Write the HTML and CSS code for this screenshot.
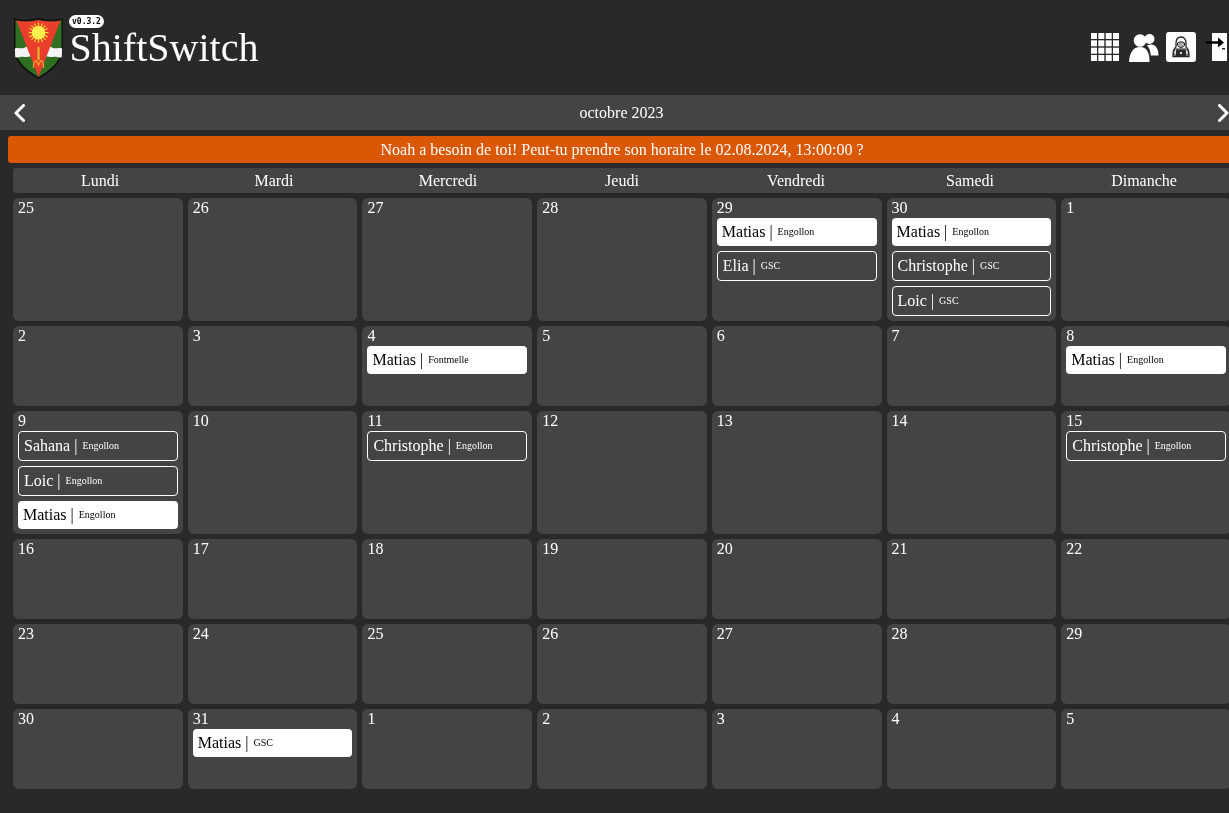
FILE: index.html
```html
<!DOCTYPE html>
<html lang="fr">
<head>
<meta charset="utf-8">
<title>ShiftSwitch</title>
<link rel="stylesheet" href="styles.css">
</head>
<body>
<div class="page">
  <header class="topbar">
    <div class="brand">
      <svg class="logo" viewBox="0 0 52 63" width="52" height="63">
        <path d="M1 1 C8 3 14 3.500 25.500 .8 C37 3.500 43 3 50 1 L50 34 C49 46 37 56 25.500 62 C14 56 2 46 1 34 Z" fill="#111"/>
        <path d="M2.500 3 C9 5 15 5 25.500 3 C36 5 42 5 48.500 3 L48.500 34 C47 45 36 54 25.500 60 C15 54 4 45 2.500 34 Z" fill="#2f7023"/>
        <path d="M1.800 31.500 C5 30 8 32 11 31 C13 29.500 16 29.500 18 30.500 L20 39.500 C16 39 14 40.500 11 40 C8 39 5 41.500 2.200 40 Z" fill="#f6f6f6"/>
        <path d="M49.200 31.500 C46 30 43 32 40 31 C38 29.500 35 29.500 33 30.500 L31 39.500 C35 39 37 40.500 40 40 C43 39 46 41.500 48.800 40 Z" fill="#f6f6f6"/>
        <path d="M3.500 3.500 C10 5 15 5 25.500 3 C36 5 41 5 47.500 3.500 L25.500 60 Z" fill="#ea3d2c"/>
        <g stroke="#fbd92b" stroke-width="1.200">
          <path d="M25.500 5.500V26M15.500 15.700H35.500M18.400 8.600L32.600 22.800M32.600 8.600L18.400 22.800M21.500 6.500L29.500 24.900M29.500 6.500L21.500 24.900M16.300 11.500L34.700 19.900M34.700 11.500L16.300 19.900"/>
        </g>
        <circle cx="25.500" cy="15.700" r="6.800" fill="#fdf04f"/>
        <path d="M25.500 30V43" stroke="#e0a92f" stroke-width="2.500"/>
        <path d="M20.500 51 C20.500 45 22 43 23.500 44 L25.500 48 L27.500 44 C29 43 30.500 45 30.500 51" fill="none" stroke="#f09a28" stroke-width="1.500"/>
      </svg>
      <div class="brand-text">
        <span class="version">v0.3.2</span>
        <span class="title">ShiftSwitch</span>
      </div>
    </div>
    <nav class="tools">
      <svg class="tool-grid" viewBox="0 0 28 28" width="28" height="28" fill="#fff">
        <rect x="0" y="0" width="6" height="6"/><rect x="7.300" y="0" width="6" height="6"/><rect x="14.700" y="0" width="6" height="6"/><rect x="22" y="0" width="6" height="6"/>
        <rect x="0" y="7.300" width="6" height="6"/><rect x="7.300" y="7.300" width="6" height="6"/><rect x="14.700" y="7.300" width="6" height="6"/><rect x="22" y="7.300" width="6" height="6"/>
        <rect x="0" y="14.700" width="6" height="6"/><rect x="7.300" y="14.700" width="6" height="6"/><rect x="14.700" y="14.700" width="6" height="6"/><rect x="22" y="14.700" width="6" height="6"/>
        <rect x="0" y="22" width="6" height="6"/><rect x="7.300" y="22" width="6" height="6"/><rect x="14.700" y="22" width="6" height="6"/><rect x="22" y="22" width="6" height="6"/>
      </svg>
      <svg class="tool-users" viewBox="0 0 30 28" width="30" height="28" fill="#fff">
        <circle cx="11" cy="6.500" r="6.300"/>
        <circle cx="20.500" cy="5" r="5"/>
        <path d="M0 28 C.5 19 4 13 11 13 C18 13 20.500 19 20.500 28 Z"/>
        <path d="M18 11.500 C19.500 10.500 21 10.500 22.500 10.500 C26 10.500 29.500 14 29.500 21.500 H21.700 C21.500 17 20.500 14 18 11.500 Z"/>
      </svg>
      <div class="tool-box">
        <svg viewBox="0 0 22 24" width="22" height="24">
          <path d="M11 2 C7.500 2 6 5 6 8.500 L6 12 C4 13.500 3 16 3 20 L3 21.500 L19 21.500 L19 20 C19 16 18 13.500 16 12 L16 8.500 C16 5 14.500 2 11 2 Z" fill="#fff" stroke="#222" stroke-width="1.300"/>
          <path d="M7.500 8 C9 6.500 13 6.500 14.500 8 L14.500 10.500 C13 13 9 13 7.500 10.500 Z" fill="#aaa" stroke="#222" stroke-width="1"/>
          <path d="M5.500 14 C4 15 3.500 17 3.500 20 L18.500 20 C18.500 17 18 15 16.500 14 Z" fill="#ddd" stroke="#222" stroke-width="1"/>
          <rect x="6" y="14.500" width="10" height="7" rx="1" fill="#2b2b2b"/>
          <rect x="10" y="17" width="2" height="2" fill="#ddd"/>
        </svg>
      </div>
      <svg class="tool-door" viewBox="0 0 24 29" width="24" height="29">
        <rect x="6" y="0" width="15" height="28" fill="#fff"/>
        <path d="M0 9.500 H13" stroke="#000" stroke-width="2.500"/>
        <path d="M12 4.500 L18 9.500 L12 14.500 Z" fill="#000"/>
        <rect x="16" y="15" width="3" height="1.500" fill="#222"/>
      </svg>
    </nav>
  </header>

  <div class="month-nav">
    <svg class="chevron" viewBox="0 0 11 18" width="11" height="18"><path d="M9.500 1.500 L2 9 L9.500 16.500" fill="none" stroke="#fff" stroke-width="3" stroke-linecap="round" stroke-linejoin="round"/></svg>
    <span>octobre 2023</span>
    <svg class="chevron" viewBox="0 0 11 18" width="11" height="18"><path d="M1.500 1.500 L9 9 L1.500 16.500" fill="none" stroke="#fff" stroke-width="3" stroke-linecap="round" stroke-linejoin="round"/></svg>
  </div>

  <main class="content">
    <div class="alert">Noah a besoin de toi! Peut-tu prendre son horaire le 02.08.2024, 13:00:00 ?</div>
    <div class="calendar">
      <div class="weekdays">
        <div>Lundi</div><div>Mardi</div><div>Mercredi</div><div>Jeudi</div><div>Vendredi</div><div>Samedi</div><div>Dimanche</div>
      </div>
      <div class="days">
        <div class="day"><div class="num">25</div></div>
        <div class="day"><div class="num">26</div></div>
        <div class="day"><div class="num">27</div></div>
        <div class="day"><div class="num">28</div></div>
        <div class="day"><div class="num">29</div>
          <div class="shift mine">Matias | <small>Engollon</small></div>
          <div class="shift">Elia | <small>GSC</small></div>
        </div>
        <div class="day"><div class="num">30</div>
          <div class="shift mine">Matias | <small>Engollon</small></div>
          <div class="shift">Christophe | <small>GSC</small></div>
          <div class="shift">Loic | <small>GSC</small></div>
        </div>
        <div class="day"><div class="num">1</div></div>

        <div class="day"><div class="num">2</div></div>
        <div class="day"><div class="num">3</div></div>
        <div class="day"><div class="num">4</div>
          <div class="shift mine">Matias | <small>Fontmelle</small></div>
        </div>
        <div class="day"><div class="num">5</div></div>
        <div class="day"><div class="num">6</div></div>
        <div class="day"><div class="num">7</div></div>
        <div class="day"><div class="num">8</div>
          <div class="shift mine">Matias | <small>Engollon</small></div>
        </div>

        <div class="day"><div class="num">9</div>
          <div class="shift">Sahana | <small>Engollon</small></div>
          <div class="shift">Loic | <small>Engollon</small></div>
          <div class="shift mine">Matias | <small>Engollon</small></div>
        </div>
        <div class="day"><div class="num">10</div></div>
        <div class="day"><div class="num">11</div>
          <div class="shift">Christophe | <small>Engollon</small></div>
        </div>
        <div class="day"><div class="num">12</div></div>
        <div class="day"><div class="num">13</div></div>
        <div class="day"><div class="num">14</div></div>
        <div class="day"><div class="num">15</div>
          <div class="shift">Christophe | <small>Engollon</small></div>
        </div>

        <div class="day"><div class="num">16</div></div>
        <div class="day"><div class="num">17</div></div>
        <div class="day"><div class="num">18</div></div>
        <div class="day"><div class="num">19</div></div>
        <div class="day"><div class="num">20</div></div>
        <div class="day"><div class="num">21</div></div>
        <div class="day"><div class="num">22</div></div>

        <div class="day"><div class="num">23</div></div>
        <div class="day"><div class="num">24</div></div>
        <div class="day"><div class="num">25</div></div>
        <div class="day"><div class="num">26</div></div>
        <div class="day"><div class="num">27</div></div>
        <div class="day"><div class="num">28</div></div>
        <div class="day"><div class="num">29</div></div>

        <div class="day"><div class="num">30</div></div>
        <div class="day"><div class="num">31</div>
          <div class="shift mine">Matias | <small>GSC</small></div>
        </div>
        <div class="day"><div class="num">1</div></div>
        <div class="day"><div class="num">2</div></div>
        <div class="day"><div class="num">3</div></div>
        <div class="day"><div class="num">4</div></div>
        <div class="day"><div class="num">5</div></div>
      </div>
    </div>
  </main>
</div>
</body>
</html>
```
FILE: styles.css
```css
* { box-sizing: border-box; }
html, body { margin: 0; height: 100%; overflow: hidden; background: #292929; }
body { font-family: "Liberation Serif", "Times New Roman", serif; font-size: 16px; line-height: 18px; color: #fff; }
.page { width: 1243px; will-change: opacity; }

.topbar { height: 95px; display: flex; justify-content: space-between; align-items: flex-start; }
.brand { display: flex; align-items: flex-start; padding: 15px 0 0 13px; gap: 4px; }
.logo { display: block; margin-top: 2px; }
.brand-text { display: flex; flex-direction: column; align-items: flex-start; }
.version { font-family: "DejaVu Sans Mono", monospace; font-size: 8px; font-weight: bold; line-height: 13px; height: 13px; padding: 0 3px; background: #fff; color: #000; border-radius: 7px; }
.title { font-size: 40px; line-height: 40px; margin-left: .5px; }
.tools { display: flex; align-items: center; padding: 32px 13px 0 0; }
.tool-grid { display: block; margin-right: 10px; }
.tool-users { display: block; margin-right: 7px; margin-top: 1px; }
.tool-box { width: 30px; height: 30px; background: #fff; border-radius: 3px; display: flex; align-items: center; justify-content: center; margin-right: 10px; }
.tool-door { display: block; margin-top: 1px; }

.month-nav { height: 35px; background: #444; display: flex; align-items: center; justify-content: space-between; padding: 0 14px; }
.chevron { display: block; }

.content { margin: 6px 7px 0 8px; }
.alert { height: 27px; line-height: 27px; background: #da5805; border-radius: 3px; text-align: center; }
.calendar { padding: 5px 5px 0; }
.weekdays { display: grid; grid-template-columns: repeat(7, 1fr); height: 25px; line-height: 25px; background: #444; border-radius: 3px; text-align: center; }
.days { display: grid; grid-template-columns: repeat(7, minmax(0, 1fr)); grid-template-rows: repeat(6, minmax(80px, auto)); gap: 5px; margin-top: 5px; }
.day { background: #444; border-radius: 6px; padding: 1px 5px 5px; }
.num { height: 19px; line-height: 18px; }
.shift { height: 30px; padding: 5px; border: 1px solid #fff; border-radius: 4px; margin-bottom: 5px; line-height: 18px; white-space: nowrap; }
.shift.mine { height: 28px; border: 0; background: #fff; color: #000; }
.shift:last-child { margin-bottom: 0; }
.shift small { font-size: 10px; margin-left: 1px; vertical-align: 2px; }
```
